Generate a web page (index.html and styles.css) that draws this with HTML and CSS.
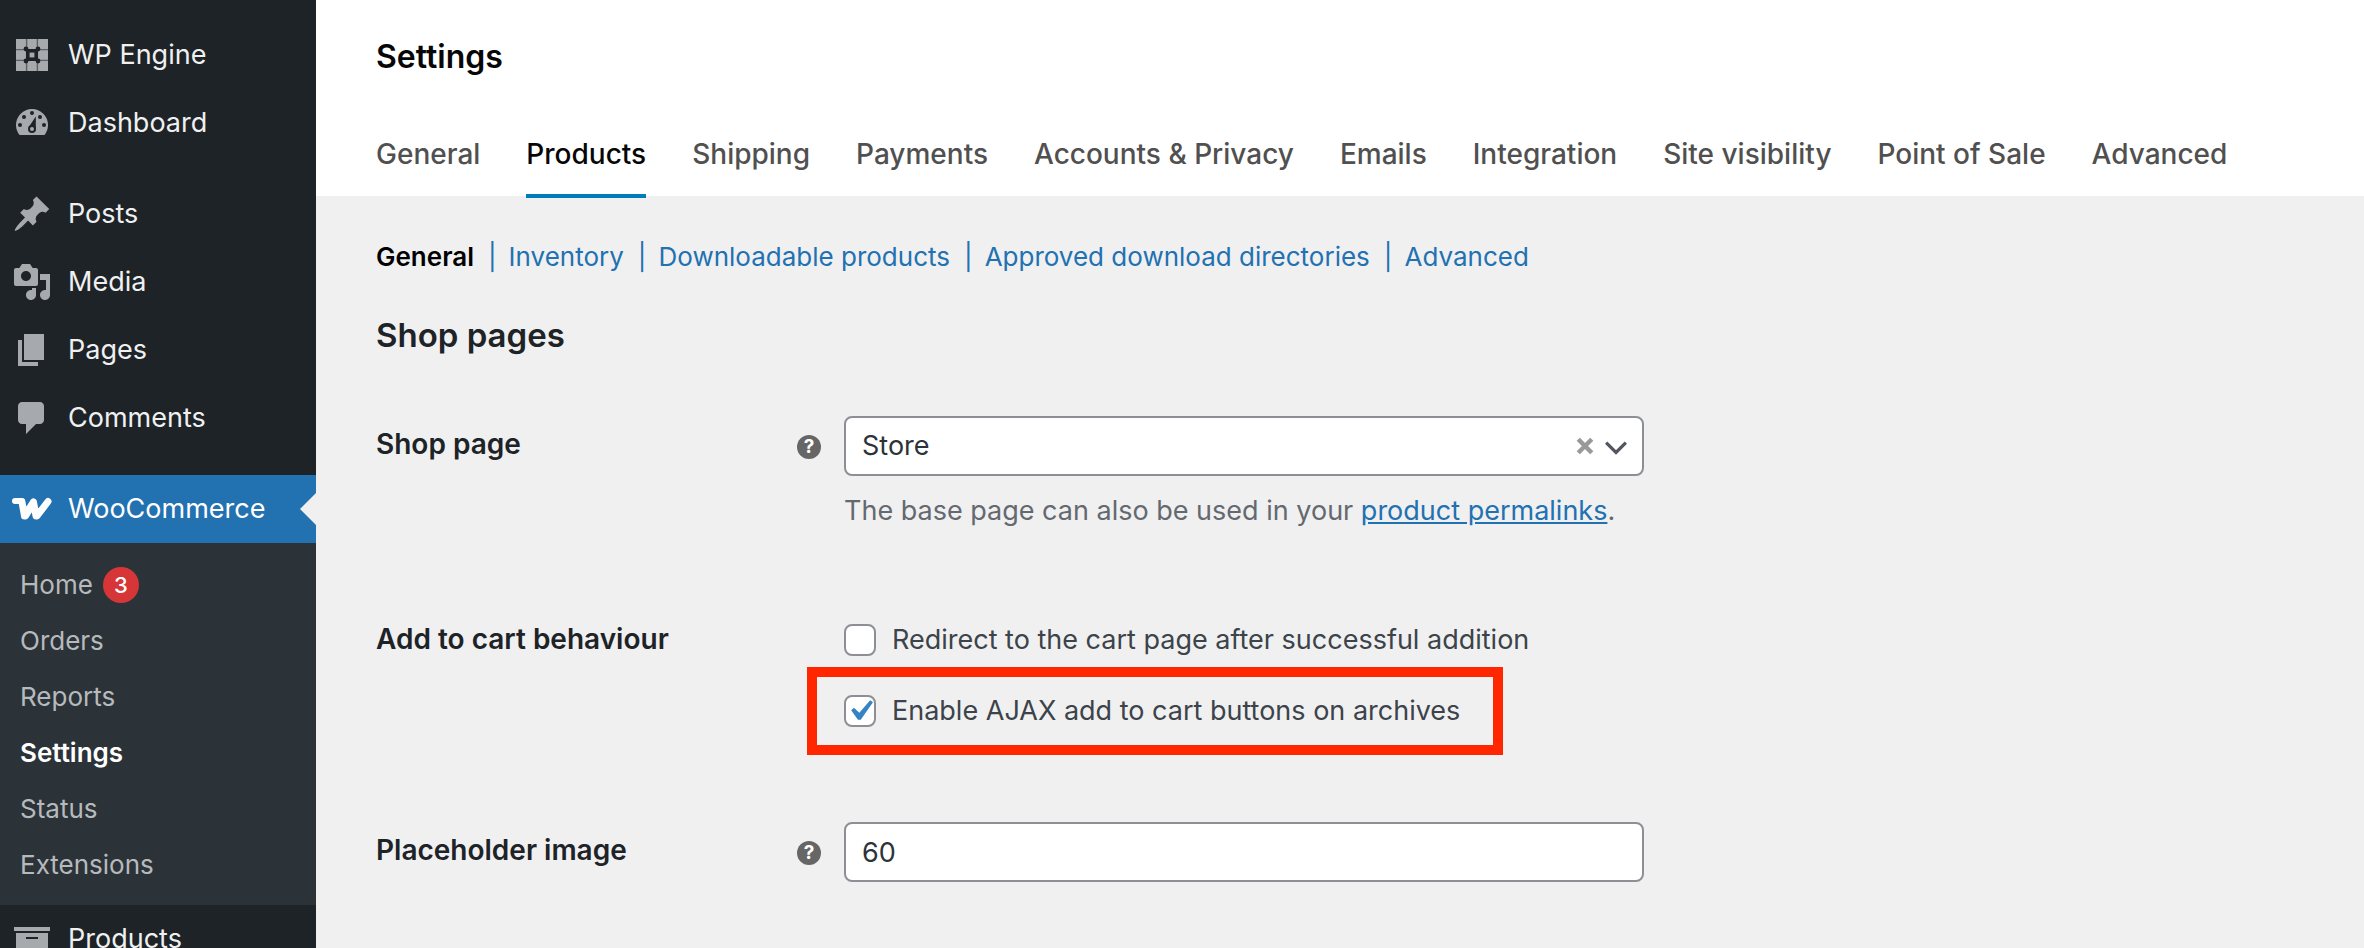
FILE: index.html
```html
<!DOCTYPE html>
<html lang="en">
<head>
  <meta charset="UTF-8">
  <meta name="viewport" content="width=device-width, initial-scale=1.0">
  <title>WooCommerce Settings</title>
  <link rel="stylesheet" href="styles.css">
</head>
<body>
  <nav class="sidebar">
    <a class="menu-item" href="#">
      <svg class="icon" viewBox="0 0 20 20">
        <path d="M2 2h16v16H2z"/>
        <path class="grid-lines" d="M7.3 2v16M12.7 2v16M2 7.3h16M2 12.7h16"/>
        <g class="cutout">
          <rect x="7" y="7" width="6" height="6"/>
          <circle cx="7" cy="7" r="1.2"/>
          <circle cx="13" cy="7" r="1.2"/>
          <circle cx="7" cy="13" r="1.2"/>
          <circle cx="13" cy="13" r="1.2"/>
        </g>
        <rect x="8.8" y="8.8" width="2.4" height="2.4"/>
      </svg>
      WP Engine
    </a>
    <a class="menu-item" href="#">
      <svg class="icon" viewBox="0 0 20 20">
        <path d="M3.76 16h12.48A8 8 0 0 0 18 11 8 8 0 0 0 2 11a8 8 0 0 0 1.76 5z"/>
        <g class="cutout">
          <circle cx="10" cy="5" r="1"/>
          <circle cx="6" cy="7" r="1"/>
          <circle cx="14" cy="7" r="1"/>
          <circle cx="4" cy="11" r="1"/>
          <circle cx="16" cy="11" r="1"/>
          <circle cx="10" cy="13" r="2"/>
          <path d="M11.9 6.8 8.4 12l3.5 1z"/>
        </g>
        <circle cx="10" cy="13" r="1"/>
      </svg>
      Dashboard
    </a>
    <div class="separator"></div>
    <a class="menu-item" href="#">
      <svg class="icon" viewBox="0 0 20 20"><path d="M10.44 3.02l1.82-1.82 6.36 6.35-1.83 1.82c-1.05-.68-2.48-.57-3.41.36l-.75.75c-.92.93-1.04 2.35-.35 3.41l-1.83 1.82-2.41-2.41-2.8 2.79c-.42.42-3.38 2.71-3.8 2.29s1.86-3.39 2.28-3.81l2.79-2.79L4.1 9.36l1.83-1.82c1.05.69 2.48.57 3.4-.36l.75-.75c.93-.92 1.05-2.35.36-3.41z"/></svg>
      Posts
    </a>
    <a class="menu-item" href="#">
      <svg class="icon" viewBox="0 0 20 20"><path d="M13 11V4c0-.55-.45-1-1-1h-1.67L9 1H5L3.67 3H2c-.55 0-1 .45-1 1v7c0 .55.45 1 1 1h10c.55 0 1-.45 1-1zM7 4.5c1.38 0 2.5 1.12 2.5 2.5S8.38 9.5 7 9.5 4.5 8.38 4.5 7 5.62 4.5 7 4.5zM14 6h5v10.5c0 1.38-1.12 2.5-2.5 2.5S14 17.88 14 16.5s1.12-2.5 2.5-2.5c.17 0 .34.02.5.05V9h-3V6zm-4 8.05V13h2v3.5c0 1.38-1.12 2.5-2.5 2.5S7 17.88 7 16.5 8.12 14 9.5 14c.17 0 .34.02.5.05z"/></svg>
      Media
    </a>
    <a class="menu-item" href="#">
      <svg class="icon" viewBox="0 0 20 20"><path d="M6 15V2h10v13H6zm-1 1h8v2H3V5h2v11z"/></svg>
      Pages
    </a>
    <a class="menu-item" href="#">
      <svg class="icon" viewBox="0 0 20 20"><path d="M5 2h9c1.1 0 2 .9 2 2v7c0 1.1-.9 2-2 2h-2l-5 5v-5H5c-1.1 0-2-.9-2-2V4c0-1.1.9-2 2-2z"/></svg>
      Comments
    </a>
    <div class="separator"></div>
    <a class="menu-item current" href="#">
      <svg class="icon woo" viewBox="0 0 40 40">
        <path class="hook" d="M3 12h7"/>
        <path d="M10 13l2.500 14 9-14 2.500 14h1l11-14.500M12.500 27h1l8-13"/>
      </svg>
      WooCommerce
    </a>
    <div class="submenu">
      <a href="#">Home <span class="badge">3</span></a>
      <a href="#">Orders</a>
      <a href="#">Reports</a>
      <a class="active" href="#">Settings</a>
      <a href="#">Status</a>
      <a href="#">Extensions</a>
    </div>
    <a class="menu-item" href="#">
      <svg class="icon" viewBox="0 0 20 20"><path d="M19 4v2H1V4h18zM2 7h16v10H2V7zm11 3V9H7v1h6z"/></svg>
      Products
    </a>
  </nav>

  <main class="main">
    <header class="header">
      <h1>Settings</h1>
      <nav class="tabs">
        <a href="#">General</a>
        <a class="active" href="#">Products</a>
        <a href="#">Shipping</a>
        <a href="#">Payments</a>
        <a href="#">Accounts &amp; Privacy</a>
        <a href="#">Emails</a>
        <a href="#">Integration</a>
        <a href="#">Site visibility</a>
        <a href="#">Point of Sale</a>
        <a href="#">Advanced</a>
      </nav>
    </header>

    <form class="content">
      <ul class="subnav">
        <li><a class="active" href="#">General</a></li>
        <li><a href="#">Inventory</a></li>
        <li><a href="#">Downloadable products</a></li>
        <li><a href="#">Approved download directories</a></li>
        <li><a href="#">Advanced</a></li>
      </ul>

      <h2>Shop pages</h2>

      <div class="rows">
        <div class="row">
          <label class="row-label" for="shopPage">Shop page</label>
          <span class="help">?</span>
          <div class="field">
            <div class="select-wrap">
              <select id="shopPage">
                <option>Store</option>
              </select>
              <button type="button" class="clear" aria-label="Clear">
                <svg viewBox="0 0 16 16"><path d="M2 2l12 12M14 2L2 14"/></svg>
              </button>
              <svg class="chevron" viewBox="0 0 20 20"><path d="M1 6l9 9 9-9"/></svg>
            </div>
            <p class="description">The base page can also be used in your <a href="#">product permalinks</a>.</p>
          </div>
        </div>

        <div class="row">
          <span class="row-label">Add to cart behaviour</span>
          <div class="field checks">
            <label class="check"><input type="checkbox"> Redirect to the cart page after successful addition</label>
            <label class="check highlight"><input type="checkbox" checked> Enable AJAX add to cart buttons on archives</label>
          </div>
        </div>

        <div class="row">
          <label class="row-label" for="placeholderImage">Placeholder image</label>
          <span class="help">?</span>
          <div class="field">
            <input type="text" id="placeholderImage" value="60">
          </div>
        </div>
      </div>
    </form>
  </main>
</body>
</html>
```
FILE: styles.css
```css
* {
  margin: 0;
  padding: 0;
  box-sizing: border-box;
}
body {
  font-family: Inter, "Liberation Sans", sans-serif;
  font-size: 27px;
  line-height: 36px;
  background: #f0f0f1;
  color: #3c434a;
  display: flex;
  height: 100vh;
  overflow: hidden;
}
a {
  color: #2271b1;
  text-decoration: none;
}

/* Sidebar */
.sidebar {
  flex: 0 0 316px;
  background: #1d2327;
  padding-top: 21px;
}
.menu-item {
  display: flex;
  align-items: center;
  gap: 16px;
  height: 68px;
  padding-left: 12px;
  color: #f0f0f1;
  position: relative;
}
.icon {
  width: 40px;
  height: 40px;
  fill: #a7aaad;
}
.icon .cutout { fill: #1d2327; }
.icon .grid-lines {
  stroke: #5c6063;
  stroke-width: 0.7;
}
.icon.woo {
  fill: none;
  stroke: #fff;
  stroke-width: 7;
  stroke-linecap: round;
  stroke-linejoin: round;
}
.icon.woo .hook { stroke-width: 6; }
.separator { height: 23px; }
.menu-item.current {
  background: #2271b1;
  color: #fff;
}
/* arrow pointing at the content */
.menu-item.current::after {
  content: "";
  position: absolute;
  right: 0;
  border: 16px solid transparent;
  border-right-color: #f0f0f1;
  border-left: 0;
}
.submenu {
  background: #2c3338;
  padding: 14px 0 12px;
}
.submenu a {
  display: flex;
  align-items: center;
  gap: 10px;
  height: 56px;
  padding-left: 20px;
  font-size: 26px;
  color: #b7babd;
}
.submenu a.active {
  color: #fff;
  font-weight: 600;
}
.badge {
  width: 36px;
  height: 36px;
  border-radius: 50%;
  background: #d63638;
  color: #fff;
  font-size: 22px;
  font-weight: 500;
  text-align: center;
}

/* Header and tabs */
.main {
  flex: 1;
  min-width: 0;
}
.header {
  background: #fff;
  padding: 33px 60px 0;
}
h1 {
  font-size: 32px;
  line-height: 48px;
  font-weight: 600;
  color: #070707;
}
.tabs {
  display: flex;
  gap: 46px;
  margin-top: 33px;
  font-size: 28px;
}
.tabs a {
  padding: 22px 0;
  margin-bottom: -2px;
  border-bottom: 4px solid transparent;
  color: #505050;
  font-weight: 500;
  white-space: nowrap;
}
.tabs a.active {
  color: #070707;
  border-bottom-color: #007cba;
}

/* Settings form */
.content { padding: 43px 60px 0; }
.subnav {
  display: flex;
  list-style: none;
  font-size: 26px;
}
.subnav li + li::before {
  content: "|";
  color: #2271b1;
  margin: 0 12px 0 14px;
}
.subnav .active {
  color: #000;
  font-weight: 600;
}
h2 {
  margin: 38px 0 59px;
  font-size: 33px;
  line-height: 44px;
  font-weight: 600;
  color: #1d2327;
}
.rows {
  display: flex;
  flex-direction: column;
  gap: 82px;
}
.row {
  display: grid;
  grid-template-columns: 421px 47px minmax(0, 800px);
  align-items: start;
}
.row-label {
  padding-top: 10px;
  font-size: 28px;
  font-weight: 600;
  color: #1d2327;
}
.help {
  width: 24px;
  height: 24px;
  margin-top: 19px;
  border-radius: 50%;
  background: #666;
  color: #fff;
  font-size: 19px;
  line-height: 24px;
  font-weight: 700;
  text-align: center;
}
.field { grid-column: 3; }
.select-wrap { position: relative; }
select,
input[type="text"] {
  display: block;
  width: 100%;
  height: 60px;
  padding: 0 16px;
  border: 2px solid #8c8f94;
  border-radius: 8px;
  background: #fff;
  color: #2c3338;
  font: inherit;
  appearance: none;
}
.clear {
  position: absolute;
  top: 21px;
  right: 50px;
  width: 18px;
  height: 18px;
  border: 0;
  background: none;
}
.clear svg {
  display: block;
  fill: none;
  stroke: #999;
  stroke-width: 4;
}
.chevron {
  position: absolute;
  top: 20px;
  right: 17px;
  width: 22px;
  height: 22px;
  fill: none;
  stroke: #50575e;
  stroke-width: 3;
}
.description {
  margin-top: 17px;
  color: #646970;
}
.description a { text-decoration: underline; }
.checks {
  display: flex;
  flex-direction: column;
  align-items: flex-start;
  gap: 35px;
  padding: 11px 0;
}
.check {
  display: flex;
  align-items: center;
  gap: 16px;
  position: relative;
}
input[type="checkbox"] {
  width: 32px;
  height: 32px;
  border: 2px solid #8c8f94;
  border-radius: 8px;
  background: #fff;
  appearance: none;
}
input[type="checkbox"]:checked {
  background: #fff url("data:image/svg+xml,%3Csvg xmlns='http://www.w3.org/2000/svg' viewBox='0 0 20 20'%3E%3Cpath d='M14.83 4.89l1.34.94-5.81 8.38H9.02L5.78 9.67l1.34-1.25 2.57 2.4z' fill='%233582c4'/%3E%3C/svg%3E") center / 42px no-repeat;
}
/* red frame around the AJAX option */
.highlight::after {
  content: "";
  position: absolute;
  inset: -26px -43px -26px -37px;
  border: 10px solid #ff2600;
  pointer-events: none;
}
```
